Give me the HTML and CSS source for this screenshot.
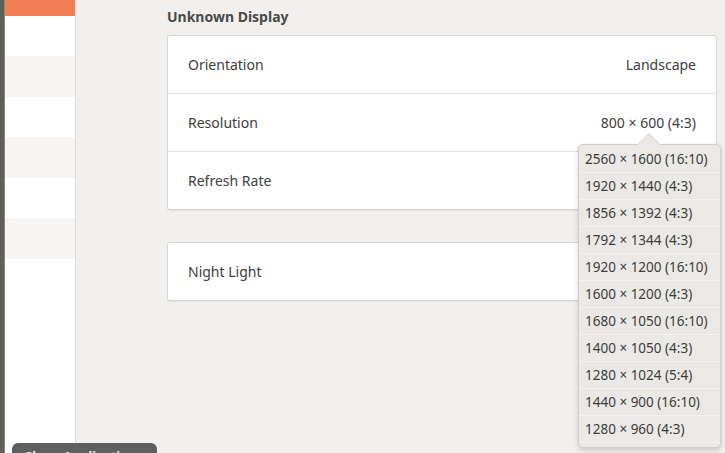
FILE: index.html
```html
<!DOCTYPE html>
<html lang="en">
<head>
    <meta charset="UTF-8">
    <title>Displays</title>
    <link rel="stylesheet" href="styles.css">
</head>
<body>
    <div class="dock-edge"></div>

    <div class="sidebar">
        <div class="side-row selected"></div>
        <div class="side-row"></div>
        <div class="side-row alt"></div>
        <div class="side-row"></div>
        <div class="side-row alt"></div>
        <div class="side-row"></div>
        <div class="side-row alt"></div>
    </div>

    <div class="main">
        <h2 class="section-title">Unknown Display</h2>

        <div class="card">
            <div class="card-row">
                <span class="row-label">Orientation</span>
                <span class="row-value">Landscape</span>
            </div>
            <div class="card-row">
                <span class="row-label">Resolution</span>
                <span class="row-value">800 × 600 (4:3)</span>
            </div>
            <div class="card-row">
                <span class="row-label">Refresh Rate</span>
            </div>
        </div>

        <div class="card night-card">
            <div class="card-row">
                <span class="row-label">Night Light</span>
            </div>
        </div>
    </div>

    <div class="popover">
        <div class="popover-arrow"></div>
        <div class="popover-item">2560 × 1600 (16:10)</div>
        <div class="popover-item">1920 × 1440 (4:3)</div>
        <div class="popover-item">1856 × 1392 (4:3)</div>
        <div class="popover-item">1792 × 1344 (4:3)</div>
        <div class="popover-item">1920 × 1200 (16:10)</div>
        <div class="popover-item">1600 × 1200 (4:3)</div>
        <div class="popover-item">1680 × 1050 (16:10)</div>
        <div class="popover-item">1400 × 1050 (4:3)</div>
        <div class="popover-item">1280 × 1024 (5:4)</div>
        <div class="popover-item">1440 × 900 (16:10)</div>
        <div class="popover-item">1280 × 960 (4:3)</div>
    </div>

    <div class="tooltip">Show Applications</div>
</body>
</html>
```

FILE: styles.css
```css
* {
    margin: 0;
    padding: 0;
    box-sizing: border-box;
}

html, body {
    height: 100%;
}

body {
    display: flex;
    overflow: hidden;
    position: relative;
    background-color: #f1f0ee;
    font-family: 'Noto Sans', 'DejaVu Sans', sans-serif;
    font-size: 14px;
    color: #3d3d3b;
}

.dock-edge {
    width: 5px;
    flex-shrink: 0;
    background-color: #625f5a;
    border-right: 1px solid #8a8782;
}

.sidebar {
    width: 71px;
    flex-shrink: 0;
    background-color: #fff;
    border-right: 1px solid #dfddd9;
    display: flex;
    flex-direction: column;
    margin-top: -25px;
}

.side-row {
    height: 40.5px;
}

.side-row.selected {
    background-color: #f27e54;
}

.side-row.alt {
    background-color: #f6f5f4;
}

.main {
    flex: 1;
    padding: 7px 8px 0 91px;
}

.section-title {
    font-size: 14px;
    font-weight: bold;
    color: #4a4a48;
    height: 28px;
}

.card {
    background-color: #fff;
    border: 1px solid #dad7d2;
    border-radius: 3px;
    box-shadow: 0 1px 1px rgba(0, 0, 0, 0.06);
}

.night-card {
    margin-top: 32px;
}

.card-row {
    height: 58px;
    display: flex;
    align-items: center;
    justify-content: space-between;
    padding: 0 20px;
    border-bottom: 1px solid #e4e2de;
}

.card-row:last-child {
    border-bottom: none;
    height: 57px;
}

.popover {
    position: absolute;
    left: 578px;
    top: 144px;
    width: 143px;
    background-color: #ebe9e6;
    border: 1px solid #d2cfca;
    border-radius: 5px;
    box-shadow: 0 2px 5px rgba(0, 0, 0, 0.18);
    padding: 1px 0 4px;
}

/* little pointer above the list, border triangle + fill triangle */
.popover-arrow {
    position: absolute;
    left: 58px;
    top: -12px;
    width: 0;
    height: 0;
    border-left: 12px solid transparent;
    border-right: 12px solid transparent;
    border-bottom: 12px solid #d2cfca;
}

.popover-arrow::after {
    content: '';
    position: absolute;
    left: -11px;
    top: 1px;
    width: 0;
    height: 0;
    border-left: 11px solid transparent;
    border-right: 11px solid transparent;
    border-bottom: 11px solid #ebe9e6;
}

.popover-item {
    height: 27px;
    line-height: 27px;
    padding-left: 6px;
    font-size: 13.5px;
    color: #3d3d3b;
    border-bottom: 1px solid #f3f2f0;
}

.tooltip {
    position: absolute;
    left: 12px;
    top: 443px;
    width: 145px;
    height: 30px;
    background-color: #5e605f;
    border-radius: 6px;
    color: #e8e8e6;
    font-size: 13px;
    font-weight: bold;
    padding: 4px 0 0 13px;
}
```
